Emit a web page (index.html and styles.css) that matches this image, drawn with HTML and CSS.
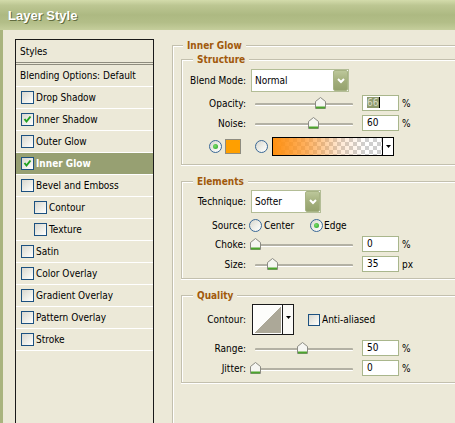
FILE: index.html
```html
<!DOCTYPE html>
<html>
<head>
<meta charset="utf-8">
<title>Layer Style</title>
<link rel="stylesheet" href="styles.css">
</head>
<body>
<div class="window">
  <div class="titlebar"><span class="title">Layer Style</span></div>
  <div class="frame">
    <div class="stylelist">
      <div class="row head">Styles</div>
      <div class="row blend">Blending Options: Default</div>
      <div class="row"><span class="cb"></span>Drop Shadow</div>
      <div class="row"><span class="cb"><svg width="9" height="9" viewBox="0 0 9 9"><path d="M1.5 4 L3.5 6.5 L7.5 1.5" fill="none" stroke="#21a121" stroke-width="2"/></svg></span>Inner Shadow</div>
      <div class="row"><span class="cb"></span>Outer Glow</div>
      <div class="row active"><span class="cb"><svg width="9" height="9" viewBox="0 0 9 9"><path d="M1.5 4 L3.5 6.5 L7.5 1.5" fill="none" stroke="#21a121" stroke-width="2"/></svg></span>Inner Glow</div>
      <div class="row"><span class="cb"></span>Bevel and Emboss</div>
      <div class="row sub"><span class="cb"></span>Contour</div>
      <div class="row sub"><span class="cb"></span>Texture</div>
      <div class="row"><span class="cb"></span>Satin</div>
      <div class="row"><span class="cb"></span>Color Overlay</div>
      <div class="row"><span class="cb"></span>Gradient Overlay</div>
      <div class="row"><span class="cb"></span>Pattern Overlay</div>
      <div class="row"><span class="cb"></span>Stroke</div>
    </div>

    <div class="panel">
      <div class="outer">
        <div class="legend">Inner Glow</div>

        <div class="group structure">
          <div class="legend">Structure</div>
          <div class="frow selrow">
            <span class="lbl">Blend Mode:</span>
            <div class="select wide"><span>Normal</span><span class="btn"><svg width="8" height="6" viewBox="0 0 8 6"><path d="M1 1 L4 4 L7 1" fill="none" stroke="#fff" stroke-width="2"/></svg></span></div>
          </div>
          <div class="frow r3">
            <span class="lbl">Opacity:</span>
            <div class="slider"><div class="track"></div><span class="thumb" style="left:64px"><svg width="11" height="12" viewBox="0 0 11 12"><path d="M0.5 4.5 L5.5 0.5 L10.5 4.5 L10.5 11.5 L0.5 11.5 Z" fill="#f6f6f2" stroke="#8b8b83"/><path d="M1 10.5 H10" stroke="#4ca52c" stroke-width="2"/></svg></span></div>
            <div class="num"><span class="hl">66</span></div>
            <span class="unit">%</span>
          </div>
          <div class="frow">
            <span class="lbl">Noise:</span>
            <div class="slider"><div class="track"></div><span class="thumb" style="left:57px"><svg width="11" height="12" viewBox="0 0 11 12"><path d="M0.5 4.5 L5.5 0.5 L10.5 4.5 L10.5 11.5 L0.5 11.5 Z" fill="#f6f6f2" stroke="#8b8b83"/><path d="M1 10.5 H10" stroke="#4ca52c" stroke-width="2"/></svg></span></div>
            <div class="num">60</div>
            <span class="unit">%</span>
          </div>
          <div class="colorrow">
            <span class="radio on"></span>
            <span class="swatch"></span>
            <span class="radio r2"></span>
            <div class="gradbox">
              <span class="gfill"></span>
              <span class="garrow"><svg width="5" height="3" viewBox="0 0 5 3"><path d="M0 0 H5 L2.5 3 Z" fill="#000"/></svg></span>
            </div>
          </div>
        </div>

        <div class="group elements">
          <div class="legend">Elements</div>
          <div class="frow selrow r2m">
            <span class="lbl">Technique:</span>
            <div class="select narrow"><span>Softer</span><span class="btn"><svg width="8" height="6" viewBox="0 0 8 6"><path d="M1 1 L4 4 L7 1" fill="none" stroke="#fff" stroke-width="2"/></svg></span></div>
          </div>
          <div class="frow source">
            <span class="lbl">Source:</span>
            <span class="opt"><span class="radio"></span><span class="otext">Center</span></span>
            <span class="opt"><span class="radio on"></span><span class="otext e">Edge</span></span>
          </div>
          <div class="frow">
            <span class="lbl">Choke:</span>
            <div class="slider"><div class="track"></div><span class="thumb" style="left:-1px"><svg width="11" height="12" viewBox="0 0 11 12"><path d="M0.5 4.5 L5.5 0.5 L10.5 4.5 L10.5 11.5 L0.5 11.5 Z" fill="#f6f6f2" stroke="#8b8b83"/><path d="M1 10.5 H10" stroke="#4ca52c" stroke-width="2"/></svg></span></div>
            <div class="num">0</div>
            <span class="unit">%</span>
          </div>
          <div class="frow">
            <span class="lbl">Size:</span>
            <div class="slider"><div class="track"></div><span class="thumb" style="left:16px"><svg width="11" height="12" viewBox="0 0 11 12"><path d="M0.5 4.5 L5.5 0.5 L10.5 4.5 L10.5 11.5 L0.5 11.5 Z" fill="#f6f6f2" stroke="#8b8b83"/><path d="M1 10.5 H10" stroke="#4ca52c" stroke-width="2"/></svg></span></div>
            <div class="num">35</div>
            <span class="unit">px</span>
          </div>
        </div>

        <div class="group quality">
          <div class="legend">Quality</div>
          <div class="frow contourrow">
            <span class="lbl">Contour:</span>
            <div class="contour"><span class="cprev"></span><span class="carrow"><svg width="5" height="3" viewBox="0 0 5 3"><path d="M0 0 H5 L2.5 3 Z" fill="#000"/></svg></span></div>
            <span class="cb small"></span><span class="aa">Anti-aliased</span>
          </div>
          <div class="frow r5">
            <span class="lbl">Range:</span>
            <div class="slider"><div class="track"></div><span class="thumb" style="left:46px"><svg width="11" height="12" viewBox="0 0 11 12"><path d="M0.5 4.5 L5.5 0.5 L10.5 4.5 L10.5 11.5 L0.5 11.5 Z" fill="#f6f6f2" stroke="#8b8b83"/><path d="M1 10.5 H10" stroke="#4ca52c" stroke-width="2"/></svg></span></div>
            <div class="num">50</div>
            <span class="unit">%</span>
          </div>
          <div class="frow">
            <span class="lbl">Jitter:</span>
            <div class="slider"><div class="track"></div><span class="thumb" style="left:-1px"><svg width="11" height="12" viewBox="0 0 11 12"><path d="M0.5 4.5 L5.5 0.5 L10.5 4.5 L10.5 11.5 L0.5 11.5 Z" fill="#f6f6f2" stroke="#8b8b83"/><path d="M1 10.5 H10" stroke="#4ca52c" stroke-width="2"/></svg></span></div>
            <div class="num">0</div>
            <span class="unit">%</span>
          </div>
        </div>
      </div>
    </div>
  </div>
</div>
</body>
</html>
```

FILE: styles.css
```css
* { box-sizing: border-box; }
html, body { margin: 0; padding: 0; }
body {
  width: 455px;
  height: 423px;
  overflow: hidden;
  background: #ece9d8;
  font-family: "DejaVu Sans Condensed", "DejaVu Sans", "Liberation Sans", sans-serif;
  font-stretch: condensed;
  font-size: 10px;
  line-height: 13px;
  color: #000;
}
.window { width: 455px; height: 423px; overflow: hidden; }

.titlebar {
  height: 30px;
  display: flex;
  align-items: center;
  padding-left: 8px;
  background: linear-gradient(to bottom, #d3dbab 0%, #bcc692 18%, #adb982 50%, #b3be88 75%, #c5ce9c 100%);
}
.title {
  font-family: "Liberation Sans", Arial, sans-serif;
  font-weight: bold;
  font-size: 13px;
  color: #fff;
  text-shadow: 1px 1px 0 #626d40;
}

.frame {
  display: flex;
  height: 393px;
  border-left: 3px solid #a9b47e;
  overflow: hidden;
}

/* left style list */
.stylelist {
  flex: none;
  margin: 9px 0 0 12px;
  width: 139px;
  height: 420px;
  border: 1px solid #1a1a1a;
}
.row {
  height: 22px;
  border-bottom: 1px solid #fff;
  display: flex;
  align-items: center;
  padding-left: 5px;
  white-space: nowrap;
}
.row.head { height: 25px; border-bottom: 3px double #8e8c7e; padding-left: 4px; }
.row.blend { padding-left: 4px; }
.row.sub { padding-left: 18px; }
.row.active { background: #97a072; color: #fff; font-weight: bold; }

.cb {
  flex: none;
  width: 13px;
  height: 13px;
  margin-right: 2px;
  border: 1px solid #1c5180;
  background: linear-gradient(135deg, #d8d7cf 0%, #eeeee8 55%, #fff 100%);
  display: flex;
  align-items: center;
  justify-content: center;
}
.cb.small { width: 12px; height: 12px; margin: 0 2px 0 14px; }

/* right panel */
.panel { flex: none; width: 300px; margin: 15px 0 0 18px; }
.outer {
  height: 420px;
  border-top: 1px solid #c3c0ae;
  border-left: 1px solid #c3c0ae;
  box-shadow: inset 1px 1px 0 #fff;
}
.legend {
  display: block;
  width: fit-content;
  margin: -7px 0 0 10px;
  padding: 0 4px;
  background: #ece9d8;
  color: #a1590c;
  font-weight: bold;
  line-height: 13px;
}
.group {
  margin: 7px 0 0 8px;
  border: 1px solid #c3c0ae;
  border-right: none;
  box-shadow: inset 1px 1px 0 #fff, 0 1px 0 #fff;
  padding-bottom: 6px;
}
.group .legend { margin-left: 11px; }
.group + .group { margin-top: 16px; }
.group.structure { padding-bottom: 8px; }

.frow {
  display: flex;
  align-items: center;
  height: 16px;
  margin-top: 4px;
  white-space: nowrap;
}
.frow.r3 { margin-top: 3px; }
.frow.r5 { margin-top: 5px; }
.lbl { flex: none; width: 64px; margin-right: 5px; text-align: right; }

.frow.selrow { height: 23px; margin-top: 3px; }
.frow.selrow.r2m { margin-top: 2px; }
.select {
  flex: none;
  height: 23px;
  border: 1px solid #b3bd96;
  background: #fff;
  display: flex;
  align-items: center;
  justify-content: space-between;
  padding-left: 3px;
}
.select.wide { width: 98px; }
.select.narrow { width: 70px; }
.select .btn {
  width: 15px;
  height: 21px;
  border: 1px solid #a7b384;
  border-radius: 2px;
  background: linear-gradient(to bottom, #bcc79a 0%, #a2ae7b 55%, #95a26e 100%);
  display: flex;
  align-items: center;
  justify-content: center;
}

.slider { flex: none; position: relative; width: 106px; height: 16px; margin-right: 5px; }
.track {
  margin: 8px 0 0 4px;
  width: 98px;
  height: 3px;
  border-top: 2px solid #b3b1a4;
  border-bottom: 1px solid #fff;
  border-radius: 1px;
}
.thumb { position: absolute; top: 2px; width: 11px; height: 12px; display: block; line-height: 0; }

.num {
  flex: none;
  width: 37px;
  height: 16px;
  border: 1px solid #a9b68c;
  background: #fff;
  padding-left: 4px;
  line-height: 14px;
  margin-right: 3px;
}
.hl { background: #8e9a6d; color: #d8dbc8; border-right: 1px solid #000; padding-right: 1px; }

.colorrow { display: flex; align-items: center; height: 19px; margin: 6px 0 0 27px; }
.radio {
  flex: none;
  width: 13px;
  height: 13px;
  border-radius: 50%;
  border: 1px solid #3a6896;
  background: linear-gradient(135deg, #d8d7cf 0%, #f0f0ea 55%, #fff 100%);
  display: flex;
  align-items: center;
  justify-content: center;
}
.radio.on::after {
  content: "";
  width: 5px;
  height: 5px;
  border-radius: 50%;
  background: radial-gradient(circle at 40% 40%, #7ddc6a, #22a222);
}
.swatch { flex: none; width: 16px; height: 15px; margin-left: 3px; background: #ff9f00; border: 1px solid #8e8c80; }
.radio.r2 { margin-left: 14px; }
.gradbox {
  flex: none;
  display: flex;
  width: 122px;
  height: 19px;
  margin-left: 4px;
  border: 1px solid #000;
}
.gfill {
  flex: 1;
  background:
    linear-gradient(to right, #ff9010 0%, rgba(255, 150, 40, 0.75) 30%, rgba(255, 170, 90, 0.25) 62%, rgba(255, 200, 150, 0) 85%),
    repeating-conic-gradient(#cfcfcf 0 25%, #fff 0 50%) 0 0 / 8px 8px;
}
.garrow {
  width: 11px;
  border-left: 1px solid #000;
  background: #fff;
  display: flex;
  align-items: center;
  justify-content: center;
}

.frow.source { height: 14px; margin-top: 5px; }
.frow.source .lbl { margin-right: 3px; }
.opt { flex: none; display: flex; align-items: center; width: 61px; }
.otext { margin-left: 2px; }
.otext.e { margin-left: 1px; }

.frow.contourrow { height: 31px; margin-top: 2px; }
.frow.contourrow .lbl { margin-right: 6px; }
.contour { flex: none; display: flex; width: 42px; height: 31px; border: 1px solid #1a1a1a; background: #fff; }
.cprev {
  flex: 1;
  border: 1px solid #fff;
  background: linear-gradient(to bottom right, #fdfdfb 50%, #aca898 50%);
}
.carrow {
  width: 11px;
  border-left: 1px solid #1a1a1a;
  background: #fafaf7;
  display: flex;
  justify-content: center;
  padding-top: 11px;
}
.aa { margin-left: 0; }
```
